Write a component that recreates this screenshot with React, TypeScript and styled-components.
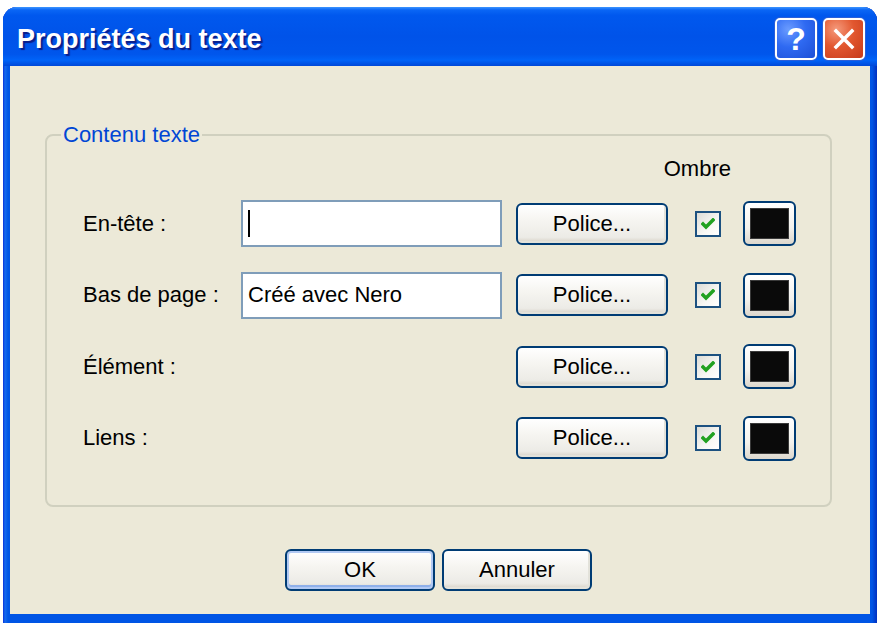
import React from "react";
import styled, { createGlobalStyle } from "styled-components";

const GlobalStyle = createGlobalStyle`
  html, body {
    margin: 0;
    padding: 0;
    background: #ffffff;
  }
  body {
    font-family: "Liberation Sans", Arial, sans-serif;
  }
`;

const Window = styled.div`
  margin: 7px 0 0 3px;
  width: 874px;
  height: 616px;
  display: flex;
  flex-direction: column;
  background: #0055e5;
  border-radius: 14px 14px 0 0;
  box-shadow: inset 1px 0 #0831d9, inset -1px 0 #001ea0, inset 0 -1px #001ea0;
  overflow: hidden;
`;

const TitleBar = styled.div`
  height: 59px;
  flex: none;
  box-sizing: border-box;
  display: flex;
  align-items: center;
  padding: 5px 12px 0 14px;
  background: linear-gradient(
    180deg,
    #3d95ff 0%,
    #0a66f5 5%,
    #0058ee 14%,
    #0053e9 50%,
    #0056ec 80%,
    #0063f8 90%,
    #0048d8 100%
  );
`;

const Title = styled.div`
  flex: 1;
  color: #ffffff;
  font-weight: bold;
  font-size: 27px;
  text-shadow: 2px 2px 1px #0a1e8a;
  white-space: nowrap;
`;

const CaptionButtons = styled.div`
  display: flex;
  gap: 6px;
`;

const CaptionButton = styled.div<{ $kind: "help" | "close" }>`
  width: 42px;
  height: 42px;
  box-sizing: border-box;
  border: 2px solid #ffffff;
  border-radius: 5px;
  display: flex;
  align-items: center;
  justify-content: center;
  color: #ffffff;
  font-weight: bold;
  font-size: 32px;
  background: ${(p) =>
    p.$kind === "help"
      ? "radial-gradient(circle at 30% 25%, #6b9cff 0%, #2f6af2 45%, #1d4fd6 100%)"
      : "radial-gradient(circle at 30% 25%, #f59a7c 0%, #e2572f 45%, #c63a1a 100%)"};
  box-shadow: 0 0 0 1px #2a5fd9;
`;

const Frame = styled.div`
  flex: 1;
  display: flex;
  padding: 0 7px 9px;
  background: linear-gradient(90deg, #0831d9 0px, #166aee 2px, #0055e5 5px, #0055e5 calc(100% - 5px), #0030c0 100%);
`;

const Content = styled.div`
  flex: 1;
  display: flex;
  flex-direction: column;
  background: #ece9d8;
  padding: 56px 38px 0 35px;
`;

const GroupBox = styled.fieldset`
  margin: 0;
  min-width: 0;
  border: 2px solid #d0d0bf;
  border-radius: 8px;
  padding: 8px 0 31px 36px;
`;

const GroupTitle = styled.legend`
  margin-left: -22px;
  padding: 0 2px;
  color: #0046d5;
  font-size: 22px;
  line-height: 26px;
`;

const Grid = styled.div`
  display: grid;
  grid-template-columns: 158px 275px 179px 48px 53px;
  grid-template-rows: 32px repeat(4, 71.5px);
  align-items: center;
  justify-items: start;
`;

const ShadowHeader = styled.div`
  grid-column: 3 / 5;
  justify-self: end;
  align-self: start;
  margin-right: 12px;
  font-size: 22px;
  line-height: 26px;
`;

const Label = styled.div`
  grid-column: 1;
  font-size: 22px;
  line-height: 26px;
  color: #000000;
  white-space: nowrap;
`;

const Field = styled.div`
  width: 261px;
  height: 47px;
  box-sizing: border-box;
  border: 2px solid #7f9db9;
  background: #ffffff;
  padding: 0 5px;
  display: flex;
  align-items: center;
  font-size: 22px;
  color: #000000;
`;

const Caret = styled.span`
  width: 2px;
  height: 27px;
  background: #000000;
`;

const PushButton = styled.button<{ $default?: boolean }>`
  width: ${(p) => (p.$default !== undefined ? "150px" : "152px")};
  height: 42px;
  box-sizing: border-box;
  border: 2px solid #003c74;
  border-radius: 6px;
  padding: 0;
  font-family: "Liberation Sans", Arial, sans-serif;
  font-size: 22px;
  color: #000000;
  background: linear-gradient(180deg, #ffffff 0%, #f6f5f1 40%, #ecebe6 85%, #d6d0c5 100%);
  box-shadow: ${(p) =>
    p.$default
      ? "inset 0 0 0 2px #b1c9f3, inset 0 -2px 0 2px #8fb0ea"
      : "inset -2px -2px 0 #e3e2da"};
`;

const CheckBox = styled.div`
  width: 26px;
  height: 26px;
  box-sizing: border-box;
  border: 2px solid #1c5180;
  background: linear-gradient(135deg, #dcdcd7 0%, #f7f7f4 60%, #ffffff 100%);
  display: flex;
  align-items: center;
  justify-content: center;
`;

const ColorButton = styled.div`
  width: 53px;
  height: 45px;
  box-sizing: border-box;
  border: 2px solid #003c74;
  border-radius: 6px;
  display: flex;
  align-items: center;
  justify-content: center;
  background: linear-gradient(180deg, #ffffff 0%, #f3f2ed 60%, #dcd7cd 100%);
`;

const Swatch = styled.div`
  width: 39px;
  height: 31px;
  box-sizing: border-box;
  background: #0a0a0a;
  border: 1px solid #3a3a3a;
`;

const Actions = styled.div`
  display: flex;
  justify-content: center;
  gap: 7px;
  margin-top: 42px;
`;

const Check = () => (
  <svg width="14" height="12" viewBox="0 0 14 12">
    <polyline
      points="2,6 5,9 12,2"
      fill="none"
      stroke="#21a121"
      strokeWidth="3.5"
      strokeLinecap="square"
    />
  </svg>
);

const CloseGlyph = () => (
  <svg width="22" height="22" viewBox="0 0 22 22">
    <path d="M3 3 L19 19 M19 3 L3 19" stroke="#ffffff" strokeWidth="3.5" strokeLinecap="square" />
  </svg>
);

type Row = { label: string; field: "caret" | string | null };

const rows: Row[] = [
  { label: "En-tête :", field: "caret" },
  { label: "Bas de page :", field: "Créé avec Nero" },
  { label: "Élément :", field: null },
  { label: "Liens :", field: null },
];

export default function App() {
  return (
    <>
      <GlobalStyle />
      <Window>
        <TitleBar>
          <Title>Propriétés du texte</Title>
          <CaptionButtons>
            <CaptionButton $kind="help">?</CaptionButton>
            <CaptionButton $kind="close">
              <CloseGlyph />
            </CaptionButton>
          </CaptionButtons>
        </TitleBar>
        <Frame>
          <Content>
            <GroupBox>
              <GroupTitle>Contenu texte</GroupTitle>
              <Grid>
                <ShadowHeader>Ombre</ShadowHeader>
                {rows.map((row) => (
                  <React.Fragment key={row.label}>
                    <Label>{row.label}</Label>
                    {row.field === null ? (
                      <span />
                    ) : (
                      <Field>{row.field === "caret" ? <Caret /> : row.field}</Field>
                    )}
                    <PushButton>Police...</PushButton>
                    <CheckBox>
                      <Check />
                    </CheckBox>
                    <ColorButton>
                      <Swatch />
                    </ColorButton>
                  </React.Fragment>
                ))}
              </Grid>
            </GroupBox>
            <Actions>
              <PushButton $default>OK</PushButton>
              <PushButton $default={false}>Annuler</PushButton>
            </Actions>
          </Content>
        </Frame>
      </Window>
    </>
  );
}
